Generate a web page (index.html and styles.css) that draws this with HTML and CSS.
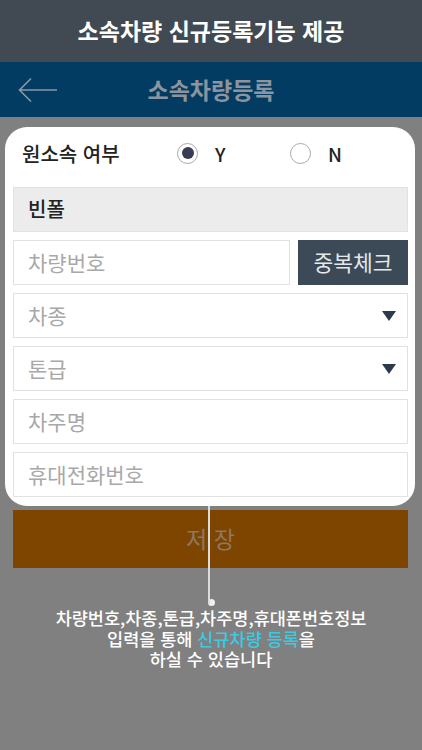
FILE: index.html
```html
<!DOCTYPE html>
<html lang="ko">
<head>
<meta charset="utf-8">
<title>소속차량등록</title>
<link rel="stylesheet" href="styles.css">
</head>
<body>
<div class="topbar">소속차량 신규등록기능 제공</div>
<div class="header">
  <svg class="back" width="40" height="26" viewBox="0 0 40 26"><path d="M39 13H2M13 1.5L1.5 13L13 24.5" fill="none" stroke="#8a98a6" stroke-width="1.6"/></svg>
  <div class="header-title">소속차량등록</div>
</div>
<main class="content">
  <section class="card">
    <div class="radio-row">
      <span class="radio-label">원소속 여부</span>
      <span class="radio-opt opt-y"><span class="radio on"></span>Y</span>
      <span class="radio-opt opt-n"><span class="radio"></span>N</span>
    </div>
    <div class="field filled">빈폴</div>
    <div class="row">
      <div class="field grow">차량번호</div>
      <div class="btn-check">중복체크</div>
    </div>
    <div class="field select">차종<span class="tri"></span></div>
    <div class="field select">톤급<span class="tri"></span></div>
    <div class="field">차주명</div>
    <div class="field">휴대전화번호</div>
  </section>
  <div class="save">저 장</div>
  <div class="callout">
    <span class="line"></span>
    <span class="dot"></span>
    <p class="desc">차량번호,차종,톤급,차주명,휴대폰번호정보<br>입력을 통해 <span class="hl">신규차량 등록</span>을<br>하실 수 있습니다</p>
  </div>
</main>
</body>
</html>
```
FILE: styles.css
```css
* { box-sizing: border-box; }
html, body { margin: 0; padding: 0; }
body {
  width: 422px;
  height: 750px;
  background: #808080;
  font-family: "Noto Sans CJK KR", "Noto Sans", sans-serif;
  overflow: hidden;
}
.topbar {
  height: 62px;
  background: #414a52;
  color: #fff;
  font-size: 23px;
  font-weight: 700;
  display: flex;
  align-items: center;
  justify-content: center;
  padding-bottom: 2px;
}
.header {
  height: 55px;
  background: #033c62;
  display: flex;
  align-items: center;
  position: relative;
}
.back { position: absolute; left: 18px; top: 15px; }
.header-title {
  flex: 1;
  text-align: center;
  color: #8c949d;
  font-size: 23px;
  font-weight: 700;
  padding-bottom: 2px;
}
.content {
  display: flex;
  flex-direction: column;
  padding-top: 10px;
}
.card {
  margin: 0 7px 0 5px;
  background: #fff;
  border-radius: 22px;
  padding: 6px 7px 9px 8px;
  display: flex;
  flex-direction: column;
  gap: 8px;
}
.radio-row {
  height: 40px;
  display: flex;
  align-items: center;
  font-size: 20px;
  color: #222;
  margin-bottom: 6px;
  padding-left: 9px;
}
.radio-label { width: 155px; font-weight: 500; }
.radio-opt { display: flex; align-items: center; font-weight: 500; gap: 17px; font-size: 19px; }
.opt-y { width: 113px; }
.radio {
  width: 21px; height: 21px;
  border: 1.5px solid #a8a8a8;
  border-radius: 50%;
  display: inline-flex;
  align-items: center;
  justify-content: center;
}
.radio.on::after {
  content: "";
  width: 12px; height: 12px;
  border-radius: 50%;
  background: #393c56;
}
.field {
  height: 45px;
  border: 1.5px solid #e2e2e2;
  display: flex;
  align-items: center;
  padding-left: 14px;
  padding-bottom: 2px;
  color: #a8a8a8;
  font-size: 21px;
}
.field.filled {
  background: #ececec;
  color: #222;
  font-size: 20px;
  font-weight: 500;
}
.row { display: flex; gap: 8px; }
.grow { flex: 1; }
.btn-check {
  width: 110px;
  height: 45px;
  background: #3b4a56;
  color: #e6e8ea;
  font-size: 21.5px;
  display: flex;
  align-items: center;
  justify-content: center;
  padding-bottom: 2px;
}
.select { justify-content: space-between; padding-right: 11px; }
.tri {
  width: 0; height: 0;
  border-left: 7px solid transparent;
  border-right: 7px solid transparent;
  border-top: 10px solid #2c3a4b;
  margin-top: 3px;
}
.save {
  margin: 4px 14px 0 13px;
  height: 58px;
  background: #7d4500;
  color: #8d7863;
  font-size: 23px;
  display: flex;
  align-items: center;
  justify-content: center;
  padding-bottom: 2px;
}
.callout {
  position: relative;
  display: flex;
  flex-direction: column;
  align-items: center;
  padding-top: 31px;
}
.line {
  position: absolute;
  left: 208px;
  top: -62px;
  width: 2px;
  height: 98px;
  background: #dcdcdc;
}
.dot {
  width: 7px; height: 7px;
  border-radius: 50%;
  background: #f0f0f0;
  margin-left: 1px;
}
.desc {
  margin: 2px 0 0;
  text-align: center;
  color: #fff;
  font-size: 17.5px;
  font-weight: 500;
  line-height: 20.5px;
}
.hl { color: #3ccae2; }
```
